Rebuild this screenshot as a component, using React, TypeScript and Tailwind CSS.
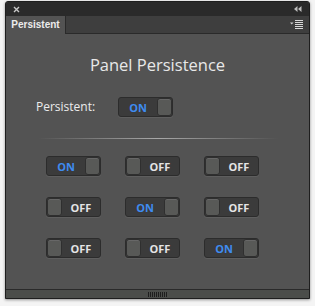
import React from 'react';

function Knob() {
  return (
    <div className="h-full w-[15px] shrink-0 rounded-[3px] border border-[#2f2f2f] bg-[#585957] shadow-[inset_0_1px_0_#676767]" />
  );
}

function Toggle({on}: {on: boolean}) {
  return (
    <div className="flex h-[20px] w-[55px] items-stretch rounded-[3px] border border-[#2c2c2c] bg-[#3b3b3b] shadow-[0_1px_0_#5e5e5e]">
      {on ? (
        <>
          <span className="flex flex-1 items-center justify-center text-[11px] font-bold leading-none text-[#3f8cf0]">
            ON
          </span>
          <Knob />
        </>
      ) : (
        <>
          <Knob />
          <span className="flex flex-1 items-center justify-center text-[11px] font-bold leading-none text-[#e4e4e4]">
            OFF
          </span>
        </>
      )}
    </div>
  );
}

const grid = [
  [true, false, false],
  [false, true, false],
  [false, false, true],
];

export default function App() {
  return (
    <div className="h-[306px] w-[315px] bg-[#f4f4f4] px-[5px] pt-[1px] font-['Open_Sans',sans-serif]">
      <div className="flex h-[298px] flex-col overflow-hidden rounded-t-[3px] border border-[#1e1e1e] bg-[#535353] shadow-[0_1px_3px_rgba(0,0,0,0.4)]">
        {/* title bar */}
        <div className="flex h-[14px] shrink-0 items-center justify-between bg-[#2a2a2a] px-[5px]">
          <svg width="7" height="7" viewBox="0 0 7 7" className="ml-[2px]">
            <path d="M1 1L6 6M6 1L1 6" stroke="#c8c8c8" strokeWidth="1.4" />
          </svg>
          <svg width="8" height="6" viewBox="0 0 8 6" className="mr-[2px]">
            <path d="M0 3L3.5 0V6Z M4 3L7.5 0V6Z" fill="#bdbdbd" />
          </svg>
        </div>
        {/* tab row */}
        <div className="flex h-[18px] shrink-0 bg-[#3e3e3e]">
          <div className="flex w-[60px] items-center justify-center border-r border-[#2a2a2a] bg-[#535353] font-['Liberation_Sans',sans-serif] text-[10px] font-bold leading-none text-[#ececec]">
            Persistent
          </div>
          <div className="flex flex-1 items-center justify-end border-b border-[#2a2a2a] pr-[5px]">
            <svg width="14" height="9" viewBox="0 0 14 9">
              <path d="M0 2.5H3.5L1.75 4.5Z" fill="#cfcfcf" />
              <path d="M5 0.5H13M5 2.5H13M5 4.5H13M5 6.5H13M5 8.5H13" stroke="#d8d8d8" strokeWidth="1" />
            </svg>
          </div>
        </div>
        {/* body */}
        <div className="flex flex-1 flex-col items-center">
          <div className="mt-[20px] text-[16.5px] leading-[22px] text-[#e8e8e8]">
            Panel Persistence
          </div>
          <div className="mt-[21px] flex w-full items-center pl-[30px]">
            <span className="w-[82px] text-[12px] text-[#ececec]">Persistent:</span>
            <Toggle on />
          </div>
          <div className="mt-[21px] h-px w-[240px] bg-[linear-gradient(90deg,transparent,#a8a8a8_50%,transparent)]" />
          <div className="mt-[17px] grid grid-cols-[55px_55px_55px] gap-x-[24px] gap-y-[21px] self-start pl-[40px]">
            {grid.flat().map((on, i) => (
              <Toggle key={i} on={on} />
            ))}
          </div>
        </div>
        {/* footer grip */}
        <div className="flex h-[9px] shrink-0 items-center justify-center border-t border-[#2a2a2a] bg-[#4b4d4a]">
          <svg width="20" height="5" viewBox="0 0 20 5">
            {[0, 2, 4, 6, 8, 10, 12, 14, 16, 18].map(x => (
              <rect key={x} x={x} y="0" width="1" height="5" fill="#1e1e1e" />
            ))}
          </svg>
        </div>
      </div>
    </div>
  );
}
